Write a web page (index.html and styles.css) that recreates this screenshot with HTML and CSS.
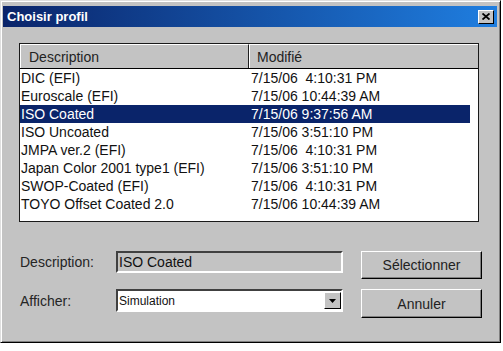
FILE: index.html
```html
<!DOCTYPE html>
<html lang="fr">
<head>
    <meta charset="UTF-8">
    <title>Choisir profil</title>
<link rel="stylesheet" href="styles.css">
</head>
<body>
    <div class="dialog">
        <div class="titlebar">
            <span class="title">Choisir profil</span>
            <span class="close">
                <svg width="8" height="7" viewBox="0 0 8 7"><path d="M0.5 0.5 L7.5 6.5 M7.5 0.5 L0.5 6.5" stroke="#000" stroke-width="1.8" fill="none"/></svg>
            </span>
        </div>
        <div class="content">
            <div class="list">
                <div class="list-head">
                    <div class="col">Description</div>
                    <div class="col">Modifié</div>
                </div>
                <div class="list-body">
                    <div class="row"><span>DIC (EFI)</span><span>7/15/06  4:10:31 PM</span></div>
                    <div class="row"><span>Euroscale (EFI)</span><span>7/15/06 10:44:39 AM</span></div>
                    <div class="row selected"><span>ISO Coated</span><span>7/15/06 9:37:56 AM</span></div>
                    <div class="row"><span>ISO Uncoated</span><span>7/15/06 3:51:10 PM</span></div>
                    <div class="row"><span>JMPA ver.2 (EFI)</span><span>7/15/06  4:10:31 PM</span></div>
                    <div class="row"><span>Japan Color 2001 type1 (EFI)</span><span>7/15/06 3:51:10 PM</span></div>
                    <div class="row"><span>SWOP-Coated (EFI)</span><span>7/15/06  4:10:31 PM</span></div>
                    <div class="row"><span>TOYO Offset Coated 2.0</span><span>7/15/06 10:44:39 AM</span></div>
                </div>
            </div>
            <div class="form">
                <div class="fields">
                    <div class="field-row">
                        <label>Description:</label>
                        <div class="textbox">ISO Coated</div>
                    </div>
                    <div class="field-row">
                        <label>Afficher:</label>
                        <div class="select">
                            <span class="select-text">Simulation</span>
                            <span class="drop">
                                <svg width="7" height="4" viewBox="0 0 7 4"><path d="M0 0 H7 L3.5 4 Z" fill="#000"/></svg>
                            </span>
                        </div>
                    </div>
                </div>
                <div class="buttons">
                    <button class="btn first">Sélectionner</button>
                    <button class="btn second">Annuler</button>
                </div>
            </div>
        </div>
    </div>
</body>
</html>
```

FILE: styles.css
```css
    body {
        margin: 0;
        background-color: #fff;
        font-family: "Liberation Sans", Arial, sans-serif;
        font-size: 14px;
        color: #111;
    }
    .dialog {
        width: 501px;
        height: 343px;
        box-sizing: border-box;
        background-color: #c3c3c3;
        border: 1px solid;
        border-color: #dfdfdf #000 #000 #dfdfdf;
        box-shadow: inset 1px 1px #fff, inset -1px -1px #808080;
        padding: 5px 3px 3px 2px;
    }
    .titlebar {
        height: 21px;
        display: flex;
        align-items: center;
        justify-content: space-between;
        padding: 0 3px 0 4px;
        background: linear-gradient(to right, #0a246a, #1f7ee0);
    }
    .title {
        color: #fff;
        font-weight: bold;
        font-size: 13px;
    }
    .close {
        width: 16px;
        height: 14px;
        box-sizing: border-box;
        background-color: #c3c3c3;
        border: 1px solid;
        border-color: #fff #000 #000 #fff;
        display: flex;
        align-items: center;
        justify-content: center;
    }
    .content {
        padding: 16px 0 0 16px;
    }
    .list {
        width: 460px;
        height: 179px;
        box-sizing: border-box;
        border: 1px solid #1a1a1a;
        background-color: #fff;
        display: flex;
        flex-direction: column;
    }
    .list-head {
        display: grid;
        grid-template-columns: 229px 229px;
        height: 25px;
        background-color: #c3c3c3;
        border-bottom: 1px solid #000;
        box-sizing: border-box;
    }
    .col {
        display: flex;
        align-items: center;
        padding-left: 8px;
        color: #222;
        border-left: 1px solid #fff;
        border-top: 1px solid #fff;
    }
    .col:first-child {
        border-right: 1px solid #202020;
    }
    .col + .col {
        padding-left: 7px;
    }
    .list-body {
        display: flex;
        flex-direction: column;
    }
    .row {
        display: grid;
        grid-template-columns: 229px 221px;
        height: 18px;
        align-items: center;
        width: 450px;
        white-space: pre;
    }
    .row span {
        padding-left: 1px;
    }
    .row span + span {
        padding-left: 2px;
    }
    .row.selected {
        background-color: #0a246a;
        color: #fff;
    }
    .form {
        display: flex;
        margin-top: 29px;
    }
    .fields {
        display: flex;
        flex-direction: column;
        gap: 16px;
    }
    .field-row {
        display: flex;
        align-items: center;
    }
    .field-row label {
        width: 97px;
        padding-left: 1px;
        box-sizing: border-box;
        color: #252525;
    }
    .textbox,
    .select {
        width: 227px;
        box-sizing: border-box;
        border: 2px solid;
        border-color: #404040 #fff #fff #404040;
        display: flex;
        align-items: center;
    }
    .textbox {
        height: 22px;
        padding-left: 1px;
        background-color: #c3c3c3;
    }
    .select {
        height: 23px;
        background-color: #fff;
        justify-content: space-between;
        padding: 0 0 0 1px;
    }
    .select-text {
        font-size: 12px;
    }
    .drop {
        width: 17px;
        height: 17px;
        box-sizing: border-box;
        background-color: #c3c3c3;
        border: 1px solid;
        border-color: #fff #000 #000 #fff;
        display: flex;
        align-items: center;
        justify-content: center;
    }
    .buttons {
        display: flex;
        flex-direction: column;
        gap: 10px;
        margin-left: 18px;
    }
    .btn {
        width: 121px;
        box-sizing: border-box;
        background-color: #c3c3c3;
        border: 1px solid;
        border-color: #fff #000 #000 #fff;
        box-shadow: inset -1px -1px #808080;
        font-family: "Liberation Sans", Arial, sans-serif;
        font-size: 14px;
        color: #222;
        padding: 0;
    }
    .btn.first {
        height: 28px;
    }
    .btn.second {
        height: 29px;
    }
```
